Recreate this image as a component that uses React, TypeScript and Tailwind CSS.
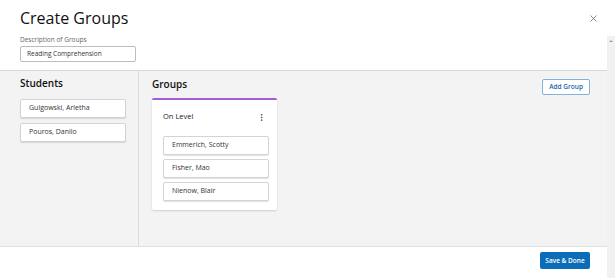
import { X, MoreVertical } from "lucide-react";

const students = ["Gulgowski, Arletha", "Pouros, Danilo"];
const members = ["Emmerich, Scotty", "Fisher, Mao", "Nienow, Blair"];

function NameCard({ name }: { name: string }) {
    return (
        <div className="h-[19px] w-[106px] bg-white border border-[#d4d4d4] rounded-[2px] shadow-[0_1px_1px_rgba(0,0,0,0.12)] flex items-center pl-[8px] text-[7px] text-[#333]">
            {name}
        </div>
    );
}

export default function App() {
    return (
        <div className="w-[615px] h-[278px] flex bg-white overflow-hidden" style={{ fontFamily: '"Open Sans", "Noto Sans", sans-serif' }}>
            <div className="w-[607px] flex flex-col">
                {/* header */}
                <div className="h-[71px] border-b border-[#d8d8d8] px-[20px] pt-[7px]">
                    <div className="flex items-start justify-between">
                        <h1 className="text-[16px] leading-[22px] text-[#111]">Create Groups</h1>
                        <X className="h-[11px] w-[11px] text-[#555] mt-[6px] mr-[-12px]" strokeWidth={1.5} />
                    </div>
                    <div className="mt-[7px] text-[6.5px] leading-[8px] text-[#666]">Description of Groups</div>
                    <div className="mt-[2px] h-[16px] w-[116px] border border-[#bdbdbd] rounded-[2px] flex items-center pl-[6px] text-[6.5px] text-[#333]">
                        Reading Comprehension
                    </div>
                </div>

                {/* body */}
                <div className="h-[175px] flex bg-[#f3f3f3]">
                    <div className="w-[139px] border-r border-[#dcdcdc] pl-[20px] pt-[5px]">
                        <h2 className="text-[10px] leading-[14px] font-semibold text-[#111]">Students</h2>
                        <div className="mt-[9px] flex flex-col gap-[5px]">
                            {students.map(s => <NameCard key={s} name={s} />)}
                        </div>
                    </div>
                    <div className="flex-1 pl-[13px] pr-[17px] pt-[8px]">
                        <div className="flex items-start justify-between">
                            <h2 className="text-[10px] leading-[12px] font-semibold text-[#111] mt-[-1px]">Groups</h2>
                            <button className="h-[16px] px-[6px] border border-[#7fb3dd] rounded-[2px] bg-white text-[6.5px] font-semibold text-[#1565a8]">
                                Add Group
                            </button>
                        </div>
                        <div className="mt-[3px] w-[125px] bg-white border-t-2 border-[#a45bd8] rounded-[2px] shadow-[0_1px_2px_rgba(0,0,0,0.15)] px-[11px] pb-[9px]">
                            <div className="h-[36px] flex items-center justify-between pb-[2px]">
                                <span className="text-[7.5px] text-[#222]">On Level</span>
                                <MoreVertical className="h-[9px] w-[9px] text-[#555]" strokeWidth={2.5} />
                            </div>
                            <div className="flex flex-col gap-[4px]">
                                {members.map(m => <NameCard key={m} name={m} />)}
                            </div>
                        </div>
                    </div>
                </div>

                {/* footer */}
                <div className="flex-1 border-t border-[#e0e0e0] flex items-start justify-end pr-[17px] pt-[5px]">
                    <button className="h-[17px] w-[50px] bg-[#0b6db7] rounded-[2px] text-[6.5px] font-semibold text-white">
                        Save &amp; Done
                    </button>
                </div>
            </div>

            {/* scrollbar */}
            <div className="w-[8px] flex flex-col">
                <div className="h-[36px] bg-white" />
                <div className="flex-1 bg-[#f1f1f1] flex justify-center pt-[4px]">
                    <div className="w-0 h-0 border-l-[2px] border-r-[2px] border-b-[2px] border-l-transparent border-r-transparent border-b-[#a3a3a3]" />
                </div>
            </div>
        </div>
    );
}
